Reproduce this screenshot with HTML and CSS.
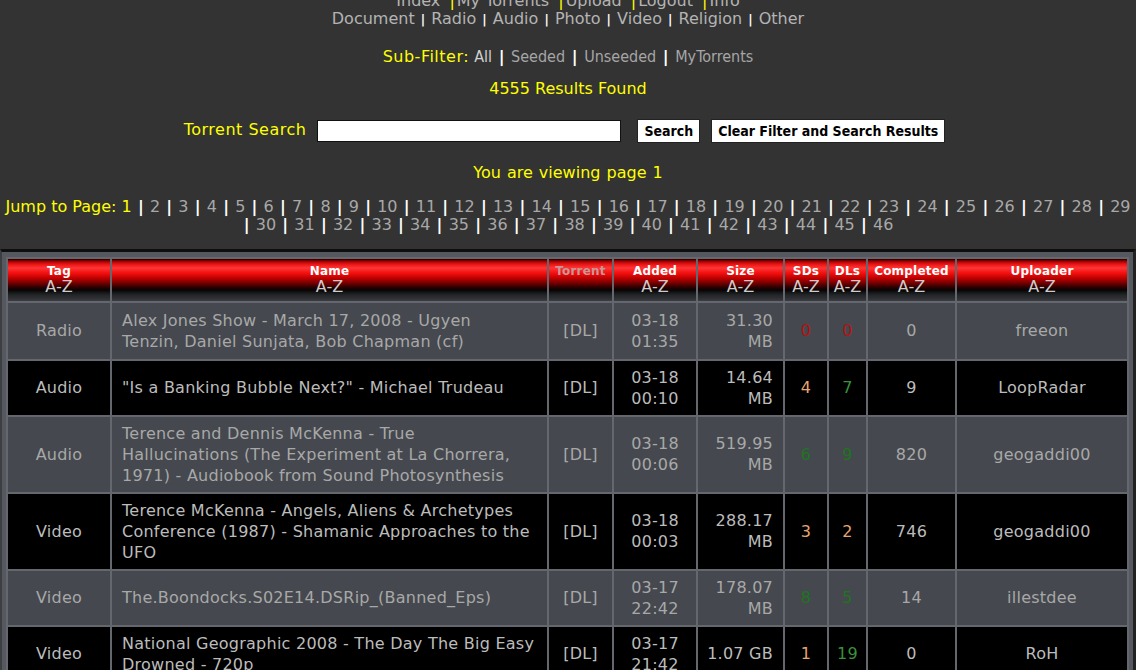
FILE: index.html
```html
<!DOCTYPE html>
<html lang="en">
<head>
<meta charset="utf-8">
<title>Torrents</title>
<link rel="stylesheet" href="styles.css">
</head>
<body>
<header class="top">
  <nav class="mainnav">
    <a href="#">Index</a> <span class="ysep">|</span><a href="#">My Torrents</a> <span class="ysep">|</span><a href="#">Upload</a> <span class="ysep">|</span><a href="#">Logout</a> <span class="ysep">|</span><a href="#">Info</a>
  </nav>
  <nav class="cats">
    <a href="#">Document</a> <span class="wsep">|</span> <a href="#">Radio</a> <span class="wsep">|</span> <a href="#">Audio</a> <span class="wsep">|</span> <a href="#">Photo</a> <span class="wsep">|</span> <a href="#">Video</a> <span class="wsep">|</span> <a href="#">Religion</a> <span class="wsep">|</span> <a href="#">Other</a>
  </nav>
  <div class="subfilter">
    <span class="label sf-label">Sub-Filter:</span> <a href="#" class="active">All</a> <span class="sep">|</span> <a href="#">Seeded</a> <span class="sep">|</span> <a href="#">Unseeded</a> <span class="sep">|</span> <a href="#">MyTorrents</a>
  </div>
  <div class="results">4555 Results Found</div>
  <form class="search">
    <label class="search-label">Torrent Search</label>
    <input type="text" class="search-input">
    <button type="button" class="btn">Search</button>
    <button type="button" class="btn btn-clear">Clear Filter and Search Results</button>
  </form>
  <div class="viewing">You are viewing page 1</div>
  <div class="jump">
    <div class="jline"><span class="label">Jump to Page:</span> <span class="cur">1</span> <span class="sep">|</span> <a href="#">2</a> <span class="sep">|</span> <a href="#">3</a> <span class="sep">|</span> <a href="#">4</a> <span class="sep">|</span> <a href="#">5</a> <span class="sep">|</span> <a href="#">6</a> <span class="sep">|</span> <a href="#">7</a> <span class="sep">|</span> <a href="#">8</a> <span class="sep">|</span> <a href="#">9</a> <span class="sep">|</span> <a href="#">10</a> <span class="sep">|</span> <a href="#">11</a> <span class="sep">|</span> <a href="#">12</a> <span class="sep">|</span> <a href="#">13</a> <span class="sep">|</span> <a href="#">14</a> <span class="sep">|</span> <a href="#">15</a> <span class="sep">|</span> <a href="#">16</a> <span class="sep">|</span> <a href="#">17</a> <span class="sep">|</span> <a href="#">18</a> <span class="sep">|</span> <a href="#">19</a> <span class="sep">|</span> <a href="#">20</a> <span class="sep">|</span> <a href="#">21</a> <span class="sep">|</span> <a href="#">22</a> <span class="sep">|</span> <a href="#">23</a> <span class="sep">|</span> <a href="#">24</a> <span class="sep">|</span> <a href="#">25</a> <span class="sep">|</span> <a href="#">26</a> <span class="sep">|</span> <a href="#">27</a> <span class="sep">|</span> <a href="#">28</a> <span class="sep">|</span> <a href="#">29</a></div>
    <div class="jline"><span class="sep">|</span> <a href="#">30</a> <span class="sep">|</span> <a href="#">31</a> <span class="sep">|</span> <a href="#">32</a> <span class="sep">|</span> <a href="#">33</a> <span class="sep">|</span> <a href="#">34</a> <span class="sep">|</span> <a href="#">35</a> <span class="sep">|</span> <a href="#">36</a> <span class="sep">|</span> <a href="#">37</a> <span class="sep">|</span> <a href="#">38</a> <span class="sep">|</span> <a href="#">39</a> <span class="sep">|</span> <a href="#">40</a> <span class="sep">|</span> <a href="#">41</a> <span class="sep">|</span> <a href="#">42</a> <span class="sep">|</span> <a href="#">43</a> <span class="sep">|</span> <a href="#">44</a> <span class="sep">|</span> <a href="#">45</a> <span class="sep">|</span> <a href="#">46</a></div>
  </div>
</header>

<div class="tablewrap">
  <table class="torrents">
    <colgroup>
      <col class="c-tag"><col class="c-name"><col class="c-tor"><col class="c-added"><col class="c-size"><col class="c-sd"><col class="c-dl"><col class="c-comp"><col class="c-up">
    </colgroup>
    <thead>
      <tr>
        <th><span class="hd">Tag</span><span class="az">A-Z</span></th>
        <th><span class="hd">Name</span><span class="az">A-Z</span></th>
        <th class="off"><span class="hd">Torrent</span></th>
        <th><span class="hd">Added</span><span class="az">A-Z</span></th>
        <th><span class="hd">Size</span><span class="az">A-Z</span></th>
        <th><span class="hd">SDs</span><span class="az">A-Z</span></th>
        <th><span class="hd">DLs</span><span class="az">A-Z</span></th>
        <th><span class="hd">Completed</span><span class="az">A-Z</span></th>
        <th><span class="hd">Uploader</span><span class="az">A-Z</span></th>
      </tr>
    </thead>
    <tbody>
      <tr class="g first">
        <td>Radio</td>
        <td class="name">Alex Jones Show - March 17, 2008 - Ugyen<br>Tenzin, Daniel Sunjata, Bob Chapman (cf)</td>
        <td>[DL]</td>
        <td>03-18<br>01:35</td>
        <td class="size">31.30<br>MB</td>
        <td><span class="red">0</span></td>
        <td><span class="red">0</span></td>
        <td>0</td>
        <td>freeon</td>
      </tr>
      <tr class="k">
        <td>Audio</td>
        <td class="name">"Is a Banking Bubble Next?" - Michael Trudeau</td>
        <td>[DL]</td>
        <td>03-18<br>00:10</td>
        <td class="size">14.64<br>MB</td>
        <td><span class="org">4</span></td>
        <td><span class="grn">7</span></td>
        <td>9</td>
        <td>LoopRadar</td>
      </tr>
      <tr class="g">
        <td>Audio</td>
        <td class="name">Terence and Dennis McKenna - True<br>Hallucinations (The Experiment at La Chorrera,<br>1971) - Audiobook from Sound Photosynthesis</td>
        <td>[DL]</td>
        <td>03-18<br>00:06</td>
        <td class="size">519.95<br>MB</td>
        <td><span class="grn">6</span></td>
        <td><span class="grn">9</span></td>
        <td>820</td>
        <td>geogaddi00</td>
      </tr>
      <tr class="k">
        <td>Video</td>
        <td class="name">Terence McKenna - Angels, Aliens &amp; Archetypes<br>Conference (1987) - Shamanic Approaches to the<br>UFO</td>
        <td>[DL]</td>
        <td>03-18<br>00:03</td>
        <td class="size">288.17<br>MB</td>
        <td><span class="org">3</span></td>
        <td><span class="org">2</span></td>
        <td>746</td>
        <td>geogaddi00</td>
      </tr>
      <tr class="g">
        <td>Video</td>
        <td class="name">The.Boondocks.S02E14.DSRip_(Banned_Eps)</td>
        <td>[DL]</td>
        <td>03-17<br>22:42</td>
        <td class="size">178.07<br>MB</td>
        <td><span class="grn">8</span></td>
        <td><span class="grn">5</span></td>
        <td>14</td>
        <td>illestdee</td>
      </tr>
      <tr class="k">
        <td>Video</td>
        <td class="name">National Geographic 2008 - The Day The Big Easy<br>Drowned - 720p</td>
        <td>[DL]</td>
        <td>03-17<br>21:42</td>
        <td class="size nowrap">1.07 GB</td>
        <td><span class="org">1</span></td>
        <td><span class="grn">19</span></td>
        <td>0</td>
        <td>RoH</td>
      </tr>
    </tbody>
  </table>
</div>
</body>
</html>
```

FILE: styles.css
```css
html {
  overflow: hidden;
}

body {
  margin: 0;
  background: #333333;
  color: #b4b4b4;
  font-family: "DejaVu Sans", Verdana, sans-serif;
  font-size: 16px;
  line-height: 18.6px;
  text-align: center;
}

a {
  color: inherit;
  text-decoration: none;
}

.mainnav {
  margin-top: -8.5px;
}

.ysep {
  color: #ffff00;
  margin: 0 2px 0 4px;
}

.wsep {
  color: #ffffff;
  font-weight: bold;
  font-size: 12px;
  margin: 0 1px;
}

.subfilter {
  margin-top: 18px;
}

.subfilter a {
  font-family: "DejaVu Sans Condensed", "DejaVu Sans", sans-serif;
  color: #a6a6a6;
}

.label {
  color: #ffff00;
}

.sf-label {
  letter-spacing: 0.5px;
}

.subfilter a.active {
  color: #d0d0d0;
}

.sep {
  color: #ffffff;
  font-weight: bold;
  margin: 0 1.5px;
}

.results {
  color: #ffff00;
  margin-top: 13.5px;
}

.search {
  display: flex;
  justify-content: center;
  align-items: center;
  height: 24px;
  margin: 21px 7px 0 0;
}

.search-label {
  color: #ffff00;
  letter-spacing: 0.5px;
  margin: -3px 11px 0 0;
}

.search-input {
  width: 304px;
  height: 22px;
  box-sizing: border-box;
  margin: 0 16px 0 0;
  padding: 0 3px;
  border: 1px solid #111111;
  background: #ffffff;
}

.btn {
  height: 24px;
  box-sizing: border-box;
  padding: 0 6px;
  border: 1px solid #222222;
  background: #ffffff;
  color: #000000;
  font-family: "DejaVu Sans Condensed", "DejaVu Sans", sans-serif;
  font-weight: bold;
  font-size: 14px;
}

.btn-clear {
  margin-left: 11px;
}

.viewing {
  color: #ffff00;
  word-spacing: 1px;
  margin-top: 20.5px;
}

.jump {
  margin-top: 15.4px;
  white-space: nowrap;
  color: #a8a8a8;
}

.jump .sep {
  margin: 0 1.1px;
}

.jump .cur {
  color: #ffff00;
}

.tablewrap {
  margin-top: 13.8px;
  border-top: 3px solid #0e0e0e;
  border-left: 2px solid #3c3e42;
  border-right: 3px solid #222222;
  padding: 5px 4px 0 4px;
  background: #55595f;
}

.torrents {
  width: 1123px;
  table-layout: fixed;
  border-collapse: separate;
  border-spacing: 2px;
  background: #64686e;
}

.c-tag { width: 102px; }
.c-name { width: 435px; }
.c-tor { width: 63px; }
.c-added { width: 82px; }
.c-size { width: 85px; }
.c-sd { width: 42px; }
.c-dl { width: 37px; }
.c-comp { width: 87px; }
.c-up { width: 170px; }

.torrents th {
  height: 32px;
  padding: 5px 0;
  vertical-align: top;
  color: #ffffff;
  background: linear-gradient(to bottom,
    #1e0000 0px,
    #900000 2px,
    #e81212 5px,
    #ff3535 9px,
    #f31010 14px,
    #c00000 19px,
    #740000 24px,
    #300000 28px,
    #080303 31px,
    #121212 33px,
    #232528 36px,
    #303236 40px,
    #3c3e44 42px);
}

.hd {
  display: block;
  font-size: 12px;
  line-height: 14px;
  font-weight: bold;
  letter-spacing: 0.2px;
}

.az {
  display: block;
  font-size: 16px;
  line-height: 18px;
  font-weight: normal;
  color: #cccccc;
}

.off .hd {
  color: #c89898;
}

.torrents td {
  padding: 6px 4px;
  line-height: 21px;
  letter-spacing: 0.25px;
  text-align: center;
  vertical-align: middle;
}

.first td {
  padding-top: 7px;
  padding-bottom: 7px;
}

.g td {
  background: #45484e;
  color: #a8a8a8;
}

.k td {
  background: #000000;
  color: #bcbcbc;
}

.torrents td.name {
  text-align: left;
  padding-left: 10px;
  white-space: nowrap;
  overflow: hidden;
}

.torrents td.size {
  text-align: right;
  padding-right: 10px;
}

.nowrap {
  white-space: nowrap;
}

.red { color: #b01414; }
.org { color: #e8a470; }
.g .grn { color: #1f741f; }
.k .grn { color: #3a923a; }
```
